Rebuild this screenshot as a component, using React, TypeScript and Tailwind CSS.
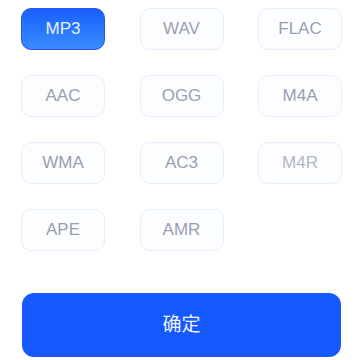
import React, { useState } from 'react';

const formats = ['MP3', 'WAV', 'FLAC', 'AAC', 'OGG', 'M4A', 'WMA', 'AC3', 'M4R', 'APE', 'AMR'];

export default function App() {
  const [selected, setSelected] = useState('MP3');

  return (
    <div
      className="w-[360px] h-[360px] bg-white overflow-hidden pt-[8px] pl-[21px]"
      style={{ fontFamily: '"Liberation Sans", Inter, "Noto Sans CJK SC", sans-serif' }}
    >
      <div className="grid grid-cols-[84px_84px_84px] gap-x-[34.5px] gap-y-[25px]">
        {formats.map((f) => {
          const active = f === selected;
          return (
            <button
              key={f}
              onClick={() => setSelected(f)}
              className={
                active
                  ? 'h-[42px] rounded-[10px] border border-[#2c55e8] bg-gradient-to-b from-[#1a5efc] to-[#3a8cff] text-[17px] text-[#e8f0ff]'
                  : `h-[42px] rounded-[10px] border border-[#e6eefb] bg-[#fcfdff] text-[17px] ${
                      f === 'M4R' ? 'text-[#b4b7c7]' : 'text-[#9a9db2]'
                    }`
              }
            >
              {f}
            </button>
          );
        })}
      </div>

      <button className="mt-[42px] w-[319px] h-[64px] ml-[1px] rounded-[12px] bg-[#1659ff] text-[#eef3ff] text-[19px]">
        确定
      </button>
    </div>
  );
}
